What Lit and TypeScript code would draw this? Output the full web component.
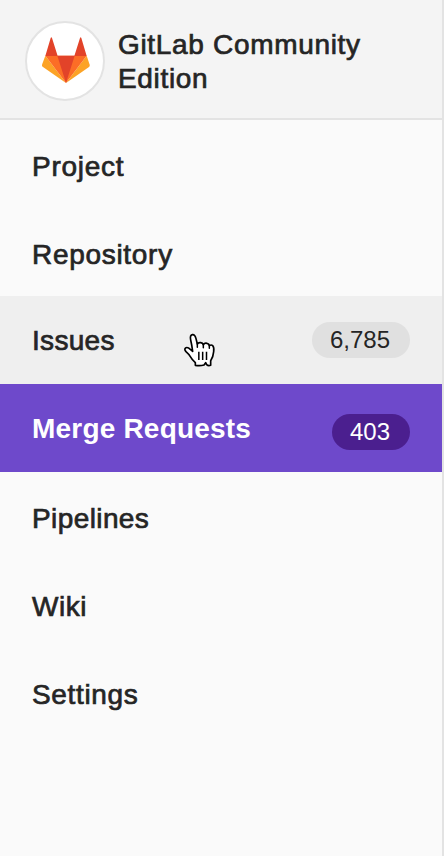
import { LitElement, html, css, svg } from "lit";
import { customElement } from "lit/decorators.js";
import { classMap } from "lit/directives/class-map.js";
import { styleMap } from "lit/directives/style-map.js";

interface NavItem {
  label: string;
  count?: string;
  state?: "hover" | "active";
  tracking: number;
}

const ITEMS: NavItem[] = [
  { label: "Project", tracking: 0.75 },
  { label: "Repository", tracking: 0.7 },
  { label: "Issues", count: "6,785", state: "hover", tracking: 0.3 },
  { label: "Merge Requests", count: "403", state: "active", tracking: 0.2 },
  { label: "Pipelines", tracking: 0.4 },
  { label: "Wiki", tracking: 0.5 },
  { label: "Settings", tracking: 0.65 },
];

@customElement("app-root")
class AppRoot extends LitElement {
  static styles = css`
    :host {
      display: block;
      box-sizing: border-box;
      height: 856px;
      background: #fafafa;
      border-right: 2px solid #e3e3e3;
      color: #252525;
      font-family: "Liberation Sans", Arial, sans-serif;
      font-size: 28px;
    }
    .header {
      box-sizing: border-box;
      height: 120px;
      display: flex;
      align-items: flex-start;
      padding: 21px 0 0 25px;
      background: #f4f4f4;
      border-bottom: 2px solid #e3e3e3;
    }
    .avatar {
      box-sizing: border-box;
      width: 80px;
      height: 80px;
      display: grid;
      place-items: center;
      border: 2px solid #e3e3e3;
      border-radius: 50%;
      background: #fff;
    }
    .avatar svg { display: block; margin: 0 0 2px 1px; }
    .title {
      margin: 7px 0 0 13px;
      line-height: 34px;
      letter-spacing: 0.68px;
      -webkit-text-stroke: 0.7px currentColor;
    }
    .title span { display: block; }
    .item {
      position: relative;
      box-sizing: border-box;
      height: 88px;
      display: flex;
      align-items: flex-start;
      justify-content: space-between;
      padding: 31px 32px 0 32px;
    }
    .label {
      line-height: 32px;
      white-space: nowrap;
      -webkit-text-stroke: 0.7px currentColor;
    }
    .hover, .active { padding-top: 29px; }
    .hover { background: #efefef; }
    .active { background: #6e49cb; color: #fff; }
    .active .label { font-weight: 700; -webkit-text-stroke: 0; }
    .badge {
      height: 36px;
      margin-top: -3px;
      padding: 0 20px 0 18px;
      border-radius: 18px;
      background: #e0e0e0;
      font-size: 24px;
      line-height: 36px;
    }
    .active .badge { margin-top: 1px; background: #4b1f8f; }
    .cursor { position: absolute; left: 170px; top: 24px; }
  `;

  private logo() {
    return svg`<svg width="48" height="46" viewBox="0 0 144 138">
      <path fill="#fca326" d="M10 56L0 83Q-1 87 3 90L72 138z"/>
      <path fill="#fca326" d="M134 56L143 83Q144 87 141 90L72 138z"/>
      <path fill="#fc6d26" d="M10 56H134L72 138z"/>
      <path fill="#e24329" d="M10 57L26 3Q28 -1 30 3L47 57zM97 57L114 3Q116 -1 118 3L134 57zM46 56H98L72 138z"/>
    </svg>`;
  }

  private cursor() {
    return html`<svg class="cursor" width="60" height="60" viewBox="0 0 180 180">
      <path fill="#fff" stroke="#000" stroke-width="5" stroke-linejoin="round"
        d="M76 136V128Q66 119 61 110Q56 102 48 95Q41 87 48 83Q54 81 61 88L68 94Q66 77 62 60Q59 46 67 44Q75 43 78 56L82 72Q85 67 92 68Q98 69 100 74Q104 68 111 70Q117 71 118 77Q124 73 128 77Q133 82 131 95Q130 110 122 122V136Q115 139 110 134L107 128L102 135Q91 138 76 136z"/>
      <path fill="none" stroke="#000" stroke-width="4.5" stroke-linecap="round" d="M82 70V82M100 73V83M118 76V85"/>
      <path fill="none" stroke="#000" stroke-width="4.5" d="M86.5 95V120M98 95V120M109.5 95V120"/>
    </svg>`;
  }

  render() {
    return html`
      <header class="header">
        <div class="avatar">${this.logo()}</div>
        <div class="title"><span>GitLab Community</span><span>Edition</span></div>
      </header>
      <nav>
        ${ITEMS.map(
          (i) => html`<div class=${classMap({ item: true, hover: i.state === "hover", active: i.state === "active" })}>
            <span class="label" style=${styleMap({ letterSpacing: `${i.tracking}px` })}>${i.label}</span>
            ${i.count ? html`<span class="badge">${i.count}</span>` : null}
            ${i.state === "hover" ? this.cursor() : null}
          </div>`
        )}
      </nav>
    `;
  }
}
